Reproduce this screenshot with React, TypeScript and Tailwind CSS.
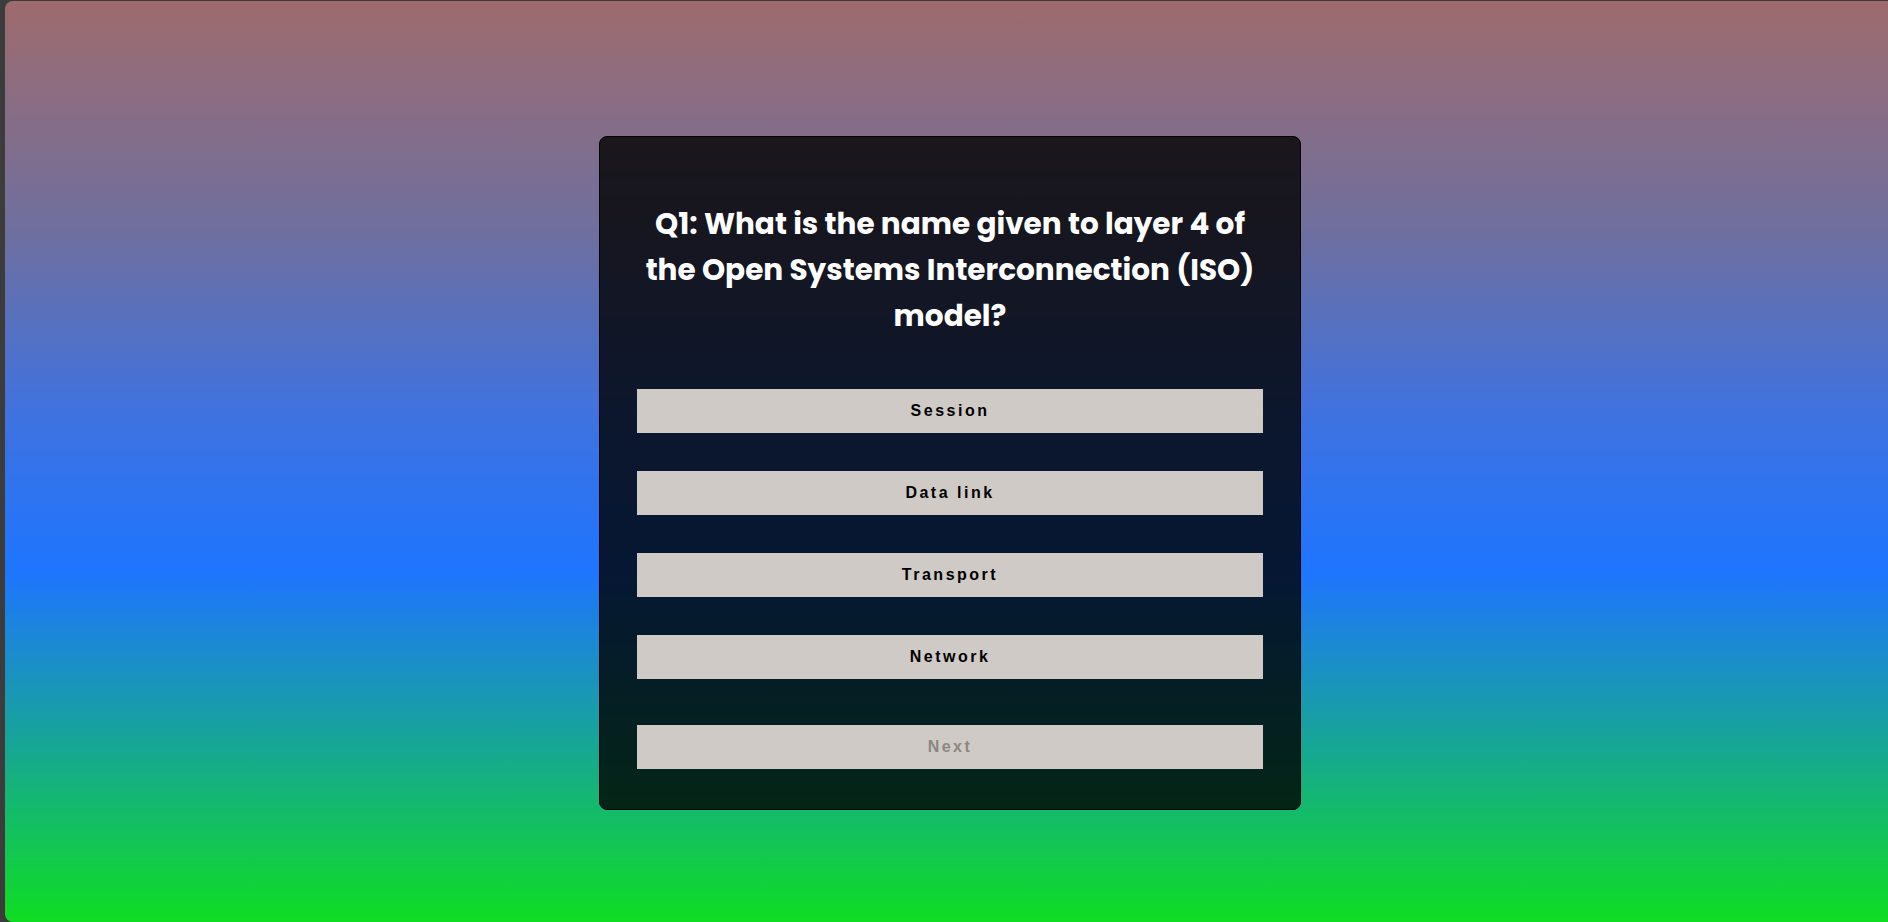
const options = ["Session", "Data link", "Transport", "Network"];

export default function App() {
  return (
    <div className="h-screen w-full bg-[#3c3c3c] pl-[5px] pt-[1px]">
      <div className="flex h-full w-full items-start justify-center rounded-l-[8px] bg-[linear-gradient(to_bottom,#9e6b6d_0%,#6f6f9f_25%,#3f72e0_45%,#1e75ff_62%,#17a49a_80%,#0fdd22_100%)] pl-[7px] pt-[135px]">
        <div className="flex w-[702px] flex-col rounded-[8px] border border-black bg-black/80 px-[37px] pb-[40px] pt-[64px]">
          <h1 className="text-center font-['Poppins','Inter',sans-serif] text-[29.5px] font-bold leading-[46px] text-white">
            Q1: What is the name given to layer 4 of the Open Systems Interconnection (ISO) model?
          </h1>

          <div className="mt-[50px] flex flex-col gap-[38px]">
            {options.map((o) => (
              <button
                key={o}
                className="h-[44px] w-full bg-[#cfcac6] font-['Liberation_Sans',Arial,sans-serif] text-[16px] font-bold tracking-[2.5px] text-black"
              >
                {o}
              </button>
            ))}
          </div>

          <button
            disabled
            className="mt-[46px] h-[44px] w-full bg-[#cfcac6] font-['Liberation_Sans',Arial,sans-serif] text-[16px] font-bold tracking-[2.5px] text-[#8b8682]"
          >
            Next
          </button>
        </div>
      </div>
    </div>
  );
}
